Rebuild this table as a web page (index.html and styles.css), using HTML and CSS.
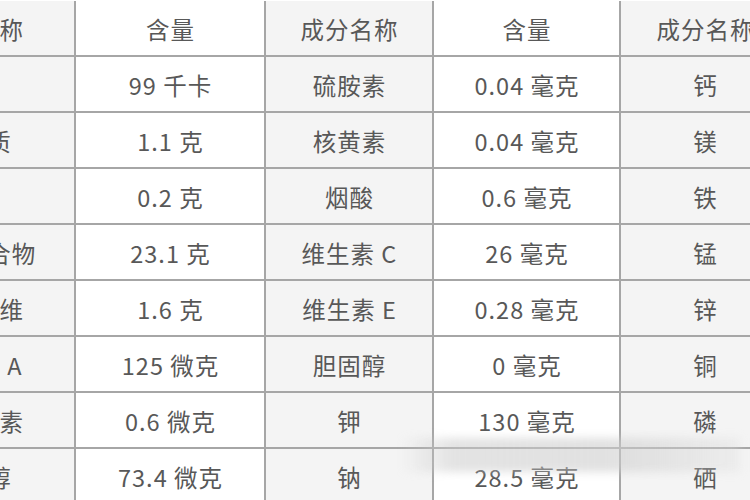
FILE: index.html
```html
<!DOCTYPE html>
<html lang="zh">
<head>
<meta charset="utf-8">
<link rel="stylesheet" href="styles.css">
</head>
<body>
<div class="table">
  <div class="cell name">成分名称</div><div class="cell amt">含量</div><div class="cell name">成分名称</div><div class="cell amt">含量</div><div class="cell name">成分名称</div>
  <div class="cell name">热量</div><div class="cell amt">99 千卡</div><div class="cell name">硫胺素</div><div class="cell amt">0.04 毫克</div><div class="cell name">钙</div>
  <div class="cell name">蛋白质</div><div class="cell amt">1.1 克</div><div class="cell name">核黄素</div><div class="cell amt">0.04 毫克</div><div class="cell name">镁</div>
  <div class="cell name">脂肪</div><div class="cell amt">0.2 克</div><div class="cell name">烟酸</div><div class="cell amt">0.6 毫克</div><div class="cell name">铁</div>
  <div class="cell name">碳水化合物</div><div class="cell amt">23.1 克</div><div class="cell name">维生素 C</div><div class="cell amt">26 毫克</div><div class="cell name">锰</div>
  <div class="cell name">膳食纤维</div><div class="cell amt">1.6 克</div><div class="cell name">维生素 E</div><div class="cell amt">0.28 毫克</div><div class="cell name">锌</div>
  <div class="cell name">维生素 A</div><div class="cell amt">125 微克</div><div class="cell name">胆固醇</div><div class="cell amt">0 毫克</div><div class="cell name">铜</div>
  <div class="cell name">胡萝卜素</div><div class="cell amt">0.6 微克</div><div class="cell name">钾</div><div class="cell amt">130 毫克</div><div class="cell name">磷</div>
  <div class="cell name">视黄醇</div><div class="cell amt">73.4 微克</div><div class="cell name">钠</div><div class="cell amt">28.5 毫克</div><div class="cell name">硒</div>
</div>
<div class="watermark"></div>
</body>
</html>
```
FILE: styles.css
```css
html, body {
  margin: 0;
  padding: 0;
  width: 750px;
  height: 500px;
  overflow: hidden;
  background: #ffffff;
}
body {
  position: relative;
  font-family: "Noto Sans CJK SC", "Noto Sans", sans-serif;
  color: #585858;
}
.table {
  display: grid;
  grid-template-columns: 201px 190px 168px 187px 170px;
  grid-auto-rows: 56px;
  margin-left: -125px;
  margin-top: 1px;
  width: 916px;
}
.cell {
  box-sizing: border-box;
  border-right: 2px solid #a6a6a6;
  border-bottom: 2px solid #a6a6a6;
  display: flex;
  align-items: center;
  justify-content: center;
  font-size: 23.5px;
  letter-spacing: 1px;
  white-space: nowrap;
  padding-top: 2px;
  padding-left: 1px;
}
.name {
  background: #f4f4f4;
}
.amt {
  background: #ffffff;
}
.watermark {
  position: absolute;
  left: 400px;
  top: 438px;
  width: 340px;
  height: 34px;
  background: linear-gradient(90deg, rgba(200,200,200,0) 0%, rgba(200,200,200,0.5) 15%, rgba(205,205,205,0.6) 60%, rgba(220,220,220,0.3) 100%);
  filter: blur(4px);
}
```
